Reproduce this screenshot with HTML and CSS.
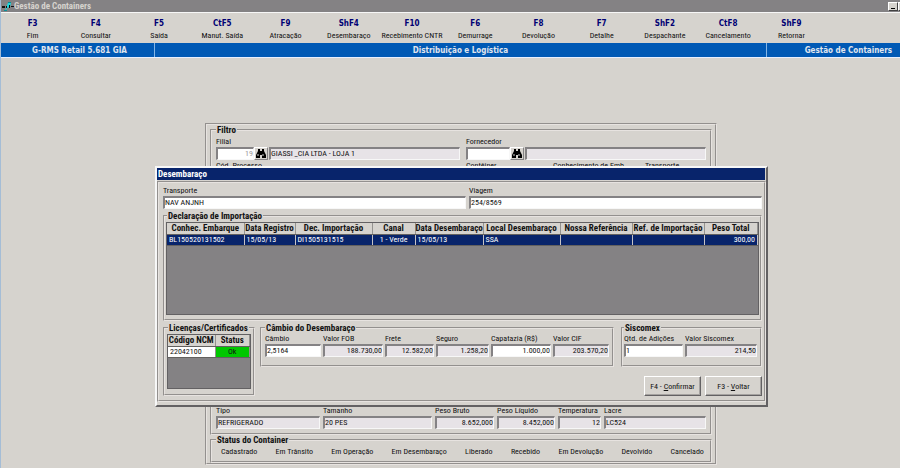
FILE: index.html
```html
<!DOCTYPE html>
<html lang="pt-BR">
  <head>
    <meta charset="UTF-8" />
    <meta name="viewport" content="width=device-width, initial-scale=1.0" />
    <title>Gestão de Containers</title>
    <link rel="stylesheet" href="styles.css" />
  </head>
  <body>
    <header class="titlebar">
      <svg class="logo" viewBox="0 0 12 11" width="12" height="11">
        <path d="M3 10 L5 4 L6 2 L9 2 L8 6 L5 7 L4 10 Z" fill="#1fd6dc" />
        <path d="M0 5h3v2H0z M4 5h1v2H4z M7 4h1v3H7z M9 5h3v1H9z" fill="#111" />
        <path d="M6 1h3v1H6z M2 9h3v1H2z" fill="#0a8f98" />
      </svg>
      <span class="titlebar-text">Gestão de Containers</span>
      <button class="win-btn" aria-label="Minimizar"><span class="win-min"></span></button>
      <button class="win-btn win-btn-cut" aria-label="Restaurar"></button>
    </header>

    <nav class="menu">
      <a href="#"><b>F3</b>Fim</a>
      <a href="#"><b>F4</b>Consultar</a>
      <a href="#"><b>F5</b>Saída</a>
      <a href="#"><b>CtF5</b>Manut. Saída</a>
      <a href="#"><b>F9</b>Atracação</a>
      <a href="#"><b>ShF4</b>Desembaraço</a>
      <a href="#"><b>F10</b>Recebimento CNTR</a>
      <a href="#"><b>F6</b>Demurrage</a>
      <a href="#"><b>F8</b>Devolução</a>
      <a href="#"><b>F7</b>Detalhe</a>
      <a href="#"><b>ShF2</b>Despachante</a>
      <a href="#"><b>CtF8</b>Cancelamento</a>
      <a href="#"><b>ShF9</b>Retornar</a>
    </nav>

    <div class="banner">
      <div class="banner-left">G-RMS Retail 5.681 GIA</div>
      <div class="banner-mid">Distribuição e Logística</div>
      <div class="banner-right">Gestão de Containers</div>
    </div>

    <main>
      <section class="panel">
        <fieldset>
          <legend>Filtro</legend>
          <div class="row filter-row">
            <div class="lookup">
              <label for="filial">Filial</label>
              <div class="lookup-line">
                <input class="code num muted" id="filial" value="19" />
                <button class="find" aria-label="Buscar filial">
                  <svg viewBox="0 0 10 9" width="10" height="9"><path d="M2 0h2v2h2V0h2v2l2 4v3H6V6H4v3H0V6l2-4z" fill="#000" /><path d="M2 5v2M7 5v2" stroke="#ccc" /></svg>
                </button>
                <input class="grow" aria-label="Nome da filial" value="GIASSI _CIA LTDA - LOJA 1" readonly />
              </div>
            </div>
            <div class="lookup">
              <label for="fornecedor">Fornecedor</label>
              <div class="lookup-line">
                <input class="code" id="fornecedor" />
                <button class="find" aria-label="Buscar fornecedor">
                  <svg viewBox="0 0 10 9" width="10" height="9"><path d="M2 0h2v2h2V0h2v2l2 4v3H6V6H4v3H0V6l2-4z" fill="#000" /><path d="M2 5v2M7 5v2" stroke="#ccc" /></svg>
                </button>
                <input class="grow" aria-label="Nome do fornecedor" readonly />
              </div>
            </div>
          </div>
          <div class="row process-row">
            <label class="field">Cód. Processo<input /></label>
            <label class="field">Contêiner<input /></label>
            <label class="field">Conhecimento de Emb.<input /></label>
            <label class="field">Transporte<input /></label>
          </div>
          <div class="row cargo-row">
            <label class="field">Tipo<input value="REFRIGERADO" readonly /></label>
            <label class="field">Tamanho<input value="20 PES" readonly /></label>
            <label class="field">Peso Bruto<input class="num" value="8.652,000" readonly /></label>
            <label class="field">Peso Líquido<input class="num" value="8.452,000" readonly /></label>
            <label class="field">Temperatura<input class="num" value="12" readonly /></label>
            <label class="field">Lacre<input value="LC524" readonly /></label>
          </div>
        </fieldset>
        <fieldset>
          <legend>Status do Container</legend>
          <div class="status-list">
            <span>Cadastrado</span>
            <span>Em Trânsito</span>
            <span>Em Operação</span>
            <span>Em Desembaraço</span>
            <span>Liberado</span>
            <span>Recebido</span>
            <span>Em Devolução</span>
            <span>Devolvido</span>
            <span>Cancelado</span>
          </div>
        </fieldset>
      </section>

      <section class="dialog" role="dialog" aria-labelledby="dialog-title">
        <h1 class="dialog-title" id="dialog-title">Desembaraço</h1>
        <div class="dialog-body">
          <div class="row trip-row">
            <label class="field">Transporte<input value="NAV ANJNH" /></label>
            <label class="field">Viagem<input value="254/8569" /></label>
          </div>

          <fieldset class="declaration">
            <legend>Declaração de Importação</legend>
            <div class="grid-box grid-tall">
              <table class="imports">
                <thead>
                  <tr>
                    <th class="c-bl">Conhec. Embarque</th>
                    <th class="c-reg">Data Registro</th>
                    <th class="c-dec">Dec. Importação</th>
                    <th class="c-canal">Canal</th>
                    <th class="c-desemb">Data Desembaraço</th>
                    <th class="c-local">Local Desembaraço</th>
                    <th class="c-ref">Nossa Referência</th>
                    <th class="c-ref">Ref. de Importação</th>
                    <th>Peso Total</th>
                  </tr>
                </thead>
                <tbody>
                  <tr class="selected">
                    <td>BL150520131502</td>
                    <td>15/05/13</td>
                    <td>DI1505131515</td>
                    <td class="mid">1 - Verde</td>
                    <td>15/05/13</td>
                    <td>SSA</td>
                    <td></td>
                    <td></td>
                    <td class="num">300,00</td>
                  </tr>
                </tbody>
              </table>
            </div>
          </fieldset>

          <div class="lower">
            <fieldset class="licenses">
              <legend>Licenças/Certificados</legend>
              <div class="grid-box grid-short">
                <table>
                  <thead>
                    <tr>
                      <th class="c-ncm">Código NCM</th>
                      <th>Status</th>
                    </tr>
                  </thead>
                  <tbody>
                    <tr>
                      <td>22042100</td>
                      <td class="ok">Ok</td>
                    </tr>
                  </tbody>
                </table>
              </div>
            </fieldset>

            <div class="lower-right">
              <div class="values">
                <fieldset class="exchange">
                  <legend>Câmbio do Desembaraço</legend>
                  <div class="row exchange-row">
                    <label class="field">Câmbio<input value="2,5164" /></label>
                    <label class="field">Valor FOB<input class="num" value="188.730,00" readonly /></label>
                    <label class="field">Frete<input class="num" value="12.582,00" readonly /></label>
                    <label class="field">Seguro<input class="num" value="1.258,20" readonly /></label>
                    <label class="field">Capatazia (R$)<input class="num" value="1.000,00" /></label>
                    <label class="field">Valor CIF<input class="num" value="203.570,20" readonly /></label>
                  </div>
                </fieldset>
                <fieldset class="siscomex">
                  <legend>Siscomex</legend>
                  <div class="row siscomex-row">
                    <label class="field">Qtd. de Adições<input value="1" /></label>
                    <label class="field">Valor Siscomex<input class="num" value="214,50" readonly /></label>
                  </div>
                </fieldset>
              </div>
              <div class="actions">
                <button class="btn">F4 - <u>C</u>onfirmar</button>
                <button class="btn">F3 - <u>V</u>oltar</button>
              </div>
            </div>
          </div>
        </div>
      </section>
    </main>
  </body>
</html>
```
FILE: styles.css
```css
:root {
  --face: #d6d3ce;
  --shadow: #848284;
  --navy: #08246b;
  --blue: #0059b5;
  --ui: "Roboto Condensed", Lato, "Liberation Sans", sans-serif;
  --wide: "DejaVu Sans Condensed", "DejaVu Sans", sans-serif;
}

* {
  box-sizing: border-box;
}

body {
  margin: 0;
  min-height: 100vh;
  overflow: hidden;
  background-color: var(--face);
  border-left: 1px solid #a5bdd6;
  color: #111;
  font: 8px/11px var(--ui);
}

button,
input {
  font: inherit;
  color: inherit;
}

/* window chrome */
.titlebar {
  display: flex;
  align-items: center;
  height: 12px;
  padding-left: 1px;
  background-color: var(--shadow);
  color: #d6d3ce;
  font: bold 9px/11px var(--ui);
}

.titlebar-text {
  flex: 1;
}

.win-btn {
  width: 10px;
  height: 9px;
  padding: 0;
  background-color: var(--face);
  border: 1px solid;
  border-color: #fff #424142 #424142 #fff;
}

.win-btn-cut {
  width: 2px;
  border-right: 0;
}

.win-min {
  display: block;
  width: 4px;
  height: 1px;
  margin: 5px 0 0 2px;
  background-color: #000;
}

.menu {
  display: grid;
  grid-template-columns: repeat(13, 1fr);
  height: 31px;
  padding: 5px 77px 0 0;
  border-top: 1px solid #f7f7f7;
}

.menu a {
  min-width: 0;
  color: #111;
  line-height: 12px;
  text-align: center;
  text-decoration: none;
  white-space: nowrap;
}

.menu b {
  display: block;
  color: #000073;
  font: bold 8px/12px var(--wide);
}

.banner {
  display: flex;
  height: 15px;
  background-color: var(--blue);
  border-bottom: 1px solid #e7efff;
  color: #e0e6ee;
  font: bold 8px/15px var(--wide);
  text-align: center;
}

.banner-left {
  width: 154px;
  padding-left: 4px;
  border-right: 1px solid #84b6e7;
}

.banner-mid {
  flex: 1;
}

.banner-right {
  width: 134px;
  padding-right: 8px;
  border-left: 1px solid #84b6e7;
  text-align: right;
}

/* shared form parts */
fieldset {
  min-width: 0;
  margin: 0;
  padding: 1px 4px 4px;
  border: 2px groove #e7e3e0;
}

legend {
  padding: 0 1px;
  font: bold 9px/10px var(--ui);
}

.row {
  display: grid;
  gap: 3px;
}

.field {
  display: flex;
  flex-direction: column;
  min-width: 0;
  white-space: nowrap;
}

input {
  width: 100%;
  min-width: 0;
  height: 13px;
  padding: 0 0 1px;
  background-color: #fff;
  border: 1px solid;
  border-width: 2px 1px 1px 2px;
  border-color: var(--shadow) #f7f7f7 #f7f7f7 var(--shadow);
  border-radius: 0;
  outline: none;
}

input[readonly] {
  background-color: #e7e3e7;
}

.num {
  text-align: right;
}

.muted {
  color: #9c9a9c;
}

main {
  display: flow-root;
  position: relative;
}

.panel {
  margin: 65px 183px 0 204px;
  padding: 0 3px;
  border: 2px groove #e7e3e0;
}

.filter-row {
  grid-template-columns: 244px 1fr;
  column-gap: 6px;
}

.lookup label {
  display: block;
}

.lookup-line {
  display: flex;
}

.code {
  width: 38px;
}

#fornecedor {
  width: 44px;
}

.find {
  display: flex;
  align-items: center;
  justify-content: center;
  width: 14px;
  height: 13px;
  margin-right: 1px;
  padding: 0;
  background-color: var(--face);
  border: 1px solid;
  border-color: #fff var(--shadow) var(--shadow) #fff;
}

.grow {
  flex: 1;
}

.process-row {
  grid-template-columns: 247px 84px 89px 1fr;
}

.cargo-row {
  grid-template-columns: 104px 109px 59px 58px 43px 1fr;
  margin-top: 221px;
}

.status-list {
  display: flex;
  justify-content: space-between;
  padding: 0 2px 0 5px;
}

/* dialog */
.dialog {
  position: absolute;
  top: 108px;
  left: 154px;
  right: 132px;
  padding-bottom: 3px;
  background-color: var(--face);
  border: 2px solid;
  border-color: #f7f7f7 #636163 #636163 #f7f7f7;
}

.dialog-title {
  margin: 0 1px 1px 0;
  padding-left: 1px;
  background-color: var(--navy);
  color: #fff;
  font: bold 9px/12px var(--ui);
}

.dialog-body {
  padding: 2px 2px 4px 4px;
  border: 2px groove #e7e3e0;
}

.trip-row {
  grid-template-columns: 303px 1fr;
}

.declaration {
  margin-top: 2px;
  padding: 1px 1px 4px;
}

.declaration legend,
.licenses legend {
  margin-left: 1px;
}

.grid-box {
  background-color: var(--shadow);
  border: 1px solid #636163;
}

.grid-tall {
  height: 93px;
}

.grid-short {
  height: 55px;
}

table {
  width: 100%;
  border-collapse: collapse;
  table-layout: fixed;
}

th,
td {
  height: 11px;
  padding: 0 2px;
  border-right: 1px solid #94928f;
  border-bottom: 1px solid #63615f;
  line-height: 10px;
  text-align: left;
  white-space: nowrap;
}

th {
  padding: 0;
  background-color: var(--face);
  font-size: 9px;
  text-align: center;
}

td {
  background-color: #fff;
}

td.num {
  text-align: right;
}

td.mid {
  text-align: center;
}

.selected td {
  background-color: var(--navy);
  border-right-color: #c6c3c6;
  color: #fff;
}

td.ok {
  background-color: #00c700;
  text-align: center;
}

.c-bl,
.c-dec,
.c-local {
  width: 77px;
}

.c-reg {
  width: 51px;
}

.c-canal {
  width: 43px;
}

.c-desemb {
  width: 68px;
}

.c-ref {
  width: 72px;
}

.c-ncm {
  width: 47px;
}

.lower {
  display: flex;
  gap: 5px;
  margin-top: 2px;
}

.licenses {
  width: 92px;
  padding: 1px 2px 4px;
}

.lower-right {
  flex: 1;
}

.values {
  display: flex;
  gap: 7px;
}

.exchange,
.siscomex {
  padding: 0 3px 8px;
}

.exchange {
  flex: 1;
}

.siscomex {
  width: 141px;
  padding-left: 1px;
}

.exchange-row {
  grid-template-columns: 56px 60px 49px 53px 60px 1fr;
  gap: 2px;
}

.siscomex-row {
  grid-template-columns: 59px 1fr;
  gap: 2px;
}

.actions {
  display: flex;
  justify-content: flex-end;
  gap: 4px;
  margin-top: 9px;
}

.btn {
  width: 57px;
  height: 20px;
  padding: 0;
  background-color: var(--face);
  border: 1px solid;
  border-color: #fff #636163 #636163 #fff;
  box-shadow: inset -1px -1px #a5a2a0;
  white-space: nowrap;
}
```
